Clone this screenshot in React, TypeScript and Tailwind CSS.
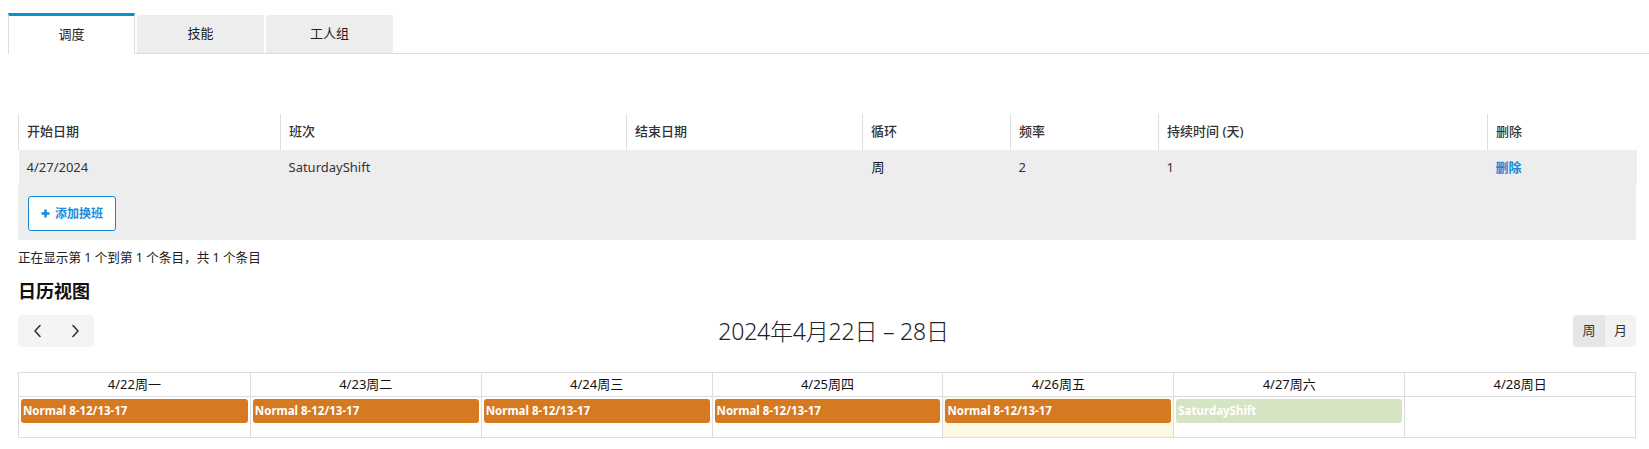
import React from "react";

const FONT = {
  fontFamily: '"Noto Sans", "Noto Sans CJK SC", sans-serif',
};

const cols = [262, 346, 236, 148, 148, 329, 149];
const headers = ["开始日期", "班次", "结束日期", "循环", "频率", "持续时间 (天)", "删除"];

const days = [
  { label: "4/22周一", ev: "Normal 8-12/13-17", kind: "orange" },
  { label: "4/23周二", ev: "Normal 8-12/13-17", kind: "orange" },
  { label: "4/24周三", ev: "Normal 8-12/13-17", kind: "orange" },
  { label: "4/25周四", ev: "Normal 8-12/13-17", kind: "orange" },
  { label: "4/26周五", ev: "Normal 8-12/13-17", kind: "orange", today: true },
  { label: "4/27周六", ev: "SaturdayShift", kind: "green" },
  { label: "4/28周日", ev: "", kind: "none" },
];

function ChevronLeft() {
  return (
    <svg width="10" height="14" viewBox="0 0 10 14" fill="none">
      <path d="M7 1.5L2 7l5 5.5" stroke="#333" strokeWidth="1.6" strokeLinecap="round" strokeLinejoin="round" />
    </svg>
  );
}
function ChevronRight() {
  return (
    <svg width="10" height="14" viewBox="0 0 10 14" fill="none">
      <path d="M3 1.5L8 7l-5 5.5" stroke="#333" strokeWidth="1.6" strokeLinecap="round" strokeLinejoin="round" />
    </svg>
  );
}
function Plus() {
  return (
    <svg width="9" height="9" viewBox="0 0 9 9">
      <path d="M4.5 0.5v8M0.5 4.5h8" stroke="#1a8ad8" strokeWidth="2.4" />
    </svg>
  );
}

export default function App() {
  return (
    <div className="w-[1649px] h-[449px] overflow-hidden bg-white text-[#333]" style={FONT}>
      {/* Tabs */}
      <div className="pt-[13px] pl-[8px]">
        <div className="flex items-end border-b border-[#dddddd] h-[41px]">
          <div className="w-[127px] h-[41px] -mb-px bg-white border-t-[3px] border-t-[#0a8fd4] border-x border-x-[#dddddd] flex items-center justify-center text-[13px] text-[#222]">
            调度
          </div>
          <div className="ml-[2px] w-[127px] h-[38px] bg-[#ededed] rounded-t-[2px] flex items-center justify-center text-[13px] text-[#222]">
            技能
          </div>
          <div className="ml-[2px] w-[127px] h-[38px] bg-[#ededed] rounded-t-[2px] flex items-center justify-center text-[13px] text-[#222]">
            工人组
          </div>
        </div>
      </div>

      <div className="pl-[18px] pr-[13px]">
        {/* Table */}
        <div className="mt-[60px]">
          <table className="border-collapse table-fixed w-[1618px]">
            <colgroup>
              {cols.map((w, i) => (
                <col key={i} style={{ width: w }} />
              ))}
            </colgroup>
            <thead>
              <tr className="h-[36px] bg-white">
                {headers.map((h) => (
                  <th
                    key={h}
                    className="border-l border-[#dddddd] text-left font-medium text-[13px] text-[#333] pl-[8px] align-middle"
                  >
                    {h}
                  </th>
                ))}
              </tr>
            </thead>
            <tbody>
              <tr className="h-[35px] bg-[#ededed] text-[13px] text-[#333]">
                <td className="pl-[8px]">4/27/2024</td>
                <td className="pl-[8px]">SaturdayShift</td>
                <td className="pl-[8px]"></td>
                <td className="pl-[9px] text-[#111]">周</td>
                <td className="pl-[8px]">2</td>
                <td className="pl-[8px]">1</td>
                <td className="pl-[8px] text-[#1a8ad8] font-semibold">删除</td>
              </tr>
            </tbody>
          </table>
          <div className="bg-[#ededed] h-[55px] pt-[11px] pl-[10px]">
            <button className="h-[35px] w-[88px] bg-white border border-[#1a8ad8] rounded-[3px] flex items-center justify-center gap-[5px] text-[12px] font-bold text-[#1a8ad8]">
              <Plus />
              <span>添加换班</span>
            </button>
          </div>
        </div>

        {/* status */}
        <div className="mt-[10px] text-[12.6px] leading-[16px] text-[#222]">
          正在显示第 1 个到第 1 个条目，共 1 个条目
        </div>

        {/* heading */}
        <div className="mt-[13px] text-[18px] leading-[24px] font-bold text-[#111]">日历视图</div>

        {/* toolbar */}
        <div className="mt-[12px] h-[32px] flex items-center justify-between">
          <div className="flex h-[32px] w-[76px] bg-[#f4f4f4] rounded-[4px]">
            <div className="w-[38px] flex items-center justify-center pl-[2px]">
              <ChevronLeft />
            </div>
            <div className="w-[38px] flex items-center justify-center">
              <ChevronRight />
            </div>
          </div>
          <div className="text-[23px] font-light text-[#222] tracking-[-0.2px]">2024年4月22日 – 28日</div>
          <div className="flex h-[32px] rounded-[4px] overflow-hidden text-[13px] text-[#333]">
            <div className="w-[32px] bg-[#e6e6e6] flex items-center justify-center">周</div>
            <div className="w-[31px] bg-[#f2f2f2] flex items-center justify-center">月</div>
          </div>
        </div>

        {/* calendar */}
        <div className="mt-[25px] border border-[#dddddd] w-[1618px]">
          <div className="grid grid-cols-7 h-[24px] border-b border-[#dddddd]">
            {days.map((d, i) => (
              <div
                key={d.label}
                className={`flex items-center justify-center text-[13px] font-normal text-[#111] ${i > 0 ? "border-l border-[#dddddd]" : ""}`}
              >
                {d.label}
              </div>
            ))}
          </div>
          <div className="grid grid-cols-7 h-[40px]">
            {days.map((d, i) => (
              <div
                key={d.label}
                className={`px-[2px] pt-[2px] ${i > 0 ? "border-l border-[#dddddd]" : ""} ${d.today ? "bg-[#fdf8e1]" : ""}`}
              >
                {d.kind === "orange" && (
                  <div className="h-[24px] rounded-[3px] bg-[#d67a21] text-white text-[11.5px] font-bold flex items-center pl-[2px] whitespace-nowrap overflow-hidden">
                    {d.ev}
                  </div>
                )}
                {d.kind === "green" && (
                  <div className="h-[24px] rounded-[3px] bg-[#d5e4c3] text-white text-[11.5px] font-bold flex items-center pl-[2px] whitespace-nowrap overflow-hidden">
                    {d.ev}
                  </div>
                )}
              </div>
            ))}
          </div>
        </div>
      </div>
    </div>
  );
}
